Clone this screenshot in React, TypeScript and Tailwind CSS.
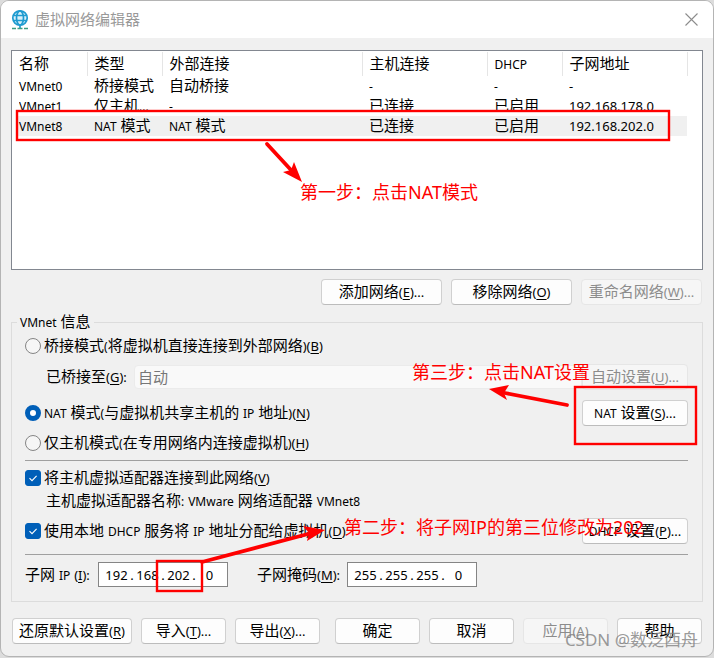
import React, { useState } from "react";

const CJK = /([\s\u3000-\u9fff\uff00-\uffef]+)/;

/* Latin runs are set smaller than the Han characters beside them; "_X" marks an access key. */
function Mixed({ text, latin = "text-[12px]" }: { text: string; latin?: string }) {
  return (
    <span className="whitespace-pre">
      {text.split(CJK).map((run, i) => {
        if (CJK.test(run)) return <span key={i}>{run}</span>;
        const [before, after] = run.split("_");
        return (
          <span key={i} className={after ? "text-[13px]" : latin}>
            {before}
            {after && (
              <>
                <u className="underline underline-offset-2">{after[0]}</u>
                {after.slice(1)}
              </>
            )}
          </span>
        );
      })}
    </span>
  );
}

function Button({ text, className, disabled }: { text: string; className: string; disabled?: boolean }) {
  return (
    <button
      type="button"
      disabled={disabled}
      className={`flex h-[26px] shrink-0 items-center justify-center rounded border border-[#d0d0d0] border-b-[#bcbcbc] bg-[#fdfdfd] disabled:border-[#e6e6e6] disabled:bg-[#f6f6f6] disabled:text-[#8c8c8c] ${className}`}
    >
      <Mixed text={text} />
    </button>
  );
}

function Radio({ text, checked, onPick }: { text: string; checked: boolean; onPick: () => void }) {
  return (
    <label className="flex h-[26px] items-center gap-[3px]">
      <input
        type="radio"
        name="mode"
        checked={checked}
        onChange={onPick}
        className="size-4 shrink-0 appearance-none rounded-full border border-[#858585] bg-[#f6f6f6] checked:border-[5px] checked:border-[#005fb8] checked:bg-white"
      />
      <Mixed text={text} />
    </label>
  );
}

function Check({ text }: { text: string }) {
  return (
    <label className="flex h-6 items-center gap-[3px]">
      <span className="grid size-4 shrink-0">
        <input
          type="checkbox"
          defaultChecked
          className="peer col-start-1 row-start-1 size-4 appearance-none rounded-[3px] border border-[#858585] bg-white checked:border-[#005fb8] checked:bg-[#005fb8]"
        />
        <svg viewBox="0 0 16 16" className="pointer-events-none invisible col-start-1 row-start-1 size-4 peer-checked:visible">
          <path d="M4.5 8.2 7 10.6 11.6 5.8" fill="none" stroke="#fff" strokeWidth="1.1" />
        </svg>
      </span>
      <Mixed text={text} />
    </label>
  );
}

function AddressBox({ label, parts }: { label: string; parts: string[] }) {
  return (
    <div role="group" aria-label={label} className="flex h-[25px] w-[130px] items-center border border-[#858585] bg-white pl-[5px] text-[13px]">
      {parts.map((p, i) => (
        <React.Fragment key={i}>
          {i > 0 && <span className="w-[6px] text-center">.</span>}
          <input aria-label={`${label} ${i + 1}`} defaultValue={p} className="w-[25px] bg-transparent text-center outline-none" />
        </React.Fragment>
      ))}
    </div>
  );
}

const columns = ["名称", "类型", "外部连接", "主机连接", "DHCP", "子网地址"];
const rows = [
  ["VMnet0", "桥接模式", "自动桥接", "-", "-", "-"],
  ["VMnet1", "仅主机...", "-", "已连接", "已启用", "192.168.178.0"],
  ["VMnet8", "NAT 模式", "NAT 模式", "已连接", "已启用", "192.168.202.0"],
];

function NetworkTable() {
  return (
    <div className="h-[220px] border border-[#828790] bg-white pt-px">
      <table className="w-[675px] table-fixed border-collapse">
        <colgroup>
          <col className="w-[75px]" />
          <col className="w-[75px]" />
          <col className="w-[200px]" />
          <col className="w-[125px]" />
          <col className="w-[75px]" />
          <col className="w-[125px]" />
        </colgroup>
        <thead>
          <tr className="h-6">
            {columns.map((c) => (
              <th key={c} scope="col" className="border-r border-[#e5e5e5] p-0 pb-px pl-[7px] text-left font-normal leading-5">
                <Mixed text={c} />
              </th>
            ))}
          </tr>
        </thead>
        <tbody>
          {rows.map((r, i) => (
            <tr key={r[0]} className={i === 2 ? "bg-[#f0f0f0]" : ""}>
              {r.map((c, j) => (
                <td key={j} className="h-5 p-0 pl-[7px] align-top leading-[18px] first:shadow-[inset_4px_0_0_#fff]">
                  <div className={i === 1 ? "h-[14px] overflow-hidden" : "h-5"}>
                    <Mixed text={c} latin={j === 5 ? "text-[13px]" : "text-[12px]"} />
                  </div>
                </td>
              ))}
            </tr>
          ))}
        </tbody>
      </table>
    </div>
  );
}

function Note({ text, className }: { text: string; className: string }) {
  return (
    <p className={`pointer-events-none absolute whitespace-nowrap text-[18px] leading-6 text-[#ff0000] ${className}`}>{text}</p>
  );
}

function Annotations() {
  return (
    <>
      <svg viewBox="0 0 714 658" className="pointer-events-none absolute left-0 top-0 h-[658px] w-[714px]" fill="none" stroke="#ff0000">
        <g strokeWidth="2.4">
          <rect x="17" y="111" width="652" height="29" />
          <rect x="575" y="387" width="121" height="57" />
          <rect x="157" y="561" width="45" height="30" />
        </g>
        <g strokeWidth="3.8" strokeLinecap="round">
          <path d="M267 144 291 170" />
          <path d="M567 405 505 393" />
          <path d="M202 562 308 534" />
        </g>
        <g fill="#ff0000" stroke="none">
          <path d="M302 182 283 172 291 170 294 162Z" />
          <path d="M489 389 509 385 504 393 507 400Z" />
          <path d="M325 530 303 526 309 533 307 541Z" />
        </g>
      </svg>
      <Note text="第一步：点击NAT模式" className="left-[300px] top-[180px]" />
      <Note text="第三步：点击NAT设置" className="left-[412px] top-[360px]" />
      <Note text="第二步：将子网IP的第三位修改为202" className="left-[344px] top-[515px]" />
      <p className="pointer-events-none absolute right-[16px] top-[628px] whitespace-nowrap text-[17px] leading-6 text-[#808080]/80">CSDN @数泛西舟</p>
    </>
  );
}

export default function App() {
  const [mode, setMode] = useState(1);
  return (
    <div className="relative bg-[#dcdcdc] pb-px font-['Noto_Sans','Noto_Sans_CJK_SC',sans-serif] text-[15px] leading-5 text-black">
      <main className="rounded-[9px] border border-[#b4b4b4] bg-[#f0f0f0] pb-[12px]">
        <header className="flex h-[37px] items-center gap-[6px] rounded-t-lg bg-white pl-[10px] pr-[15px]">
          <svg viewBox="0 0 18 20" className="h-5 w-[18px]" fill="none">
            <circle cx="9" cy="8" r="7" fill="#d8f0fa" />
            <g stroke="#1e9bd0" strokeWidth="1.7">
              <circle cx="9" cy="8" r="7.2" />
              <ellipse cx="9" cy="8" rx="3.5" ry="7" />
              <path d="M2 5.5H16M2 10.5H16M9 15V18" />
            </g>
            <path d="M1 18.5H5M6.5 18.5H11.5M13 18.5H17" stroke="#3b9d82" strokeWidth="1.6" />
          </svg>
          <h1 className="flex-1 pb-[2px] text-[15px] text-[#999]">虚拟网络编辑器</h1>
          <button type="button" aria-label="关闭" className="size-[13px]">
            <svg viewBox="0 0 13 13" className="size-[13px]" stroke="#8c8c8c" strokeWidth="1.1">
              <path d="M.5.5 12.5 12.5M12.5.5.5 12.5" />
            </svg>
          </button>
        </header>

        <div className="px-[10px] pt-3">
          <NetworkTable />

          <div className="mt-[9px] flex justify-end gap-[9px] pr-px">
            <Button text="添加网络(_E)..." className="w-[121px]" />
            <Button text="移除网络(_O)" className="w-[121px]" />
            <Button text="重命名网络(_W)..." className="w-[121px]" disabled />
          </div>

          <fieldset className="mt-[6px] border border-[#dcdcdc] pb-[14px] pl-[13px] pr-[14px]">
            <legend className="-ml-[8px] px-[3px] leading-5">
              <Mixed text="VMnet 信息" />
            </legend>
            <Radio text="桥接模式(将虚拟机直接连接到外部网络)(_B)" checked={mode === 0} onPick={() => setMode(0)} />
            <div className="mt-[5px] flex h-[26px] items-center pl-[21px]">
              <label htmlFor="bridge" className="w-[88px]">
                <Mixed text="已桥接至(_G):" />
              </label>
              <select id="bridge" disabled className="h-6 min-w-0 flex-1 appearance-none rounded-sm border border-[#ebebeb] bg-[#f9f9f9] px-[3px] leading-5 text-[#777]">
                <option>自动</option>
              </select>
              <Button text="自动设置(_U)..." className="w-[106px]" disabled />
            </div>
            <div className="mb-[3px] mt-[9px] flex h-[28px] items-center justify-between">
              <Radio text="NAT 模式(与虚拟机共享主机的 IP 地址)(_N)" checked={mode === 1} onPick={() => setMode(1)} />
              <Button text="NAT 设置(_S)..." className="w-[106px]" />
            </div>
            <Radio text="仅主机模式(在专用网络内连接虚拟机)(_H)" checked={mode === 2} onPick={() => setMode(2)} />
            <hr className="mb-[5px] mt-1 border-[#a0a0a0]" />
            <Check text="将主机虚拟适配器连接到此网络(_V)" />
            <p className="pl-[21px]">
              <Mixed text="主机虚拟适配器名称: VMware 网络适配器 VMnet8" />
            </p>
            <div className="mt-[6px] flex items-center justify-between">
              <Check text="使用本地 DHCP 服务将 IP 地址分配给虚拟机(_D)" />
              <Button text="DHCP 设置(_P)..." className="w-[106px]" />
            </div>
            <hr className="mb-[7px] mt-[10px] border-[#a0a0a0]" />
            <div className="flex items-center">
              <span className="w-[73px]">
                <Mixed text="子网 IP (_I):" />
              </span>
              <AddressBox label="子网 IP" parts={["192", "168", "202", "0"]} />
              <span className="ml-[29px] w-[90px]">
                <Mixed text="子网掩码(_M):" />
              </span>
              <AddressBox label="子网掩码" parts={["255", "255", "255", "0"]} />
            </div>
          </fieldset>

          <div className="mt-4 flex justify-between px-px">
            <div className="flex gap-[9px]">
              <Button text="还原默认设置(_R)" className="w-[120px]" />
              <Button text="导入(_T)..." className="w-[85px]" />
              <Button text="导出(_X)..." className="w-[85px]" />
            </div>
            <div className="flex gap-[9px]">
              <Button text="确定" className="w-[85px]" />
              <Button text="取消" className="w-[85px]" />
              <Button text="应用(_A)" className="w-[85px]" disabled />
              <Button text="帮助" className="w-[85px]" />
            </div>
          </div>
        </div>
      </main>
      <Annotations />
    </div>
  );
}
